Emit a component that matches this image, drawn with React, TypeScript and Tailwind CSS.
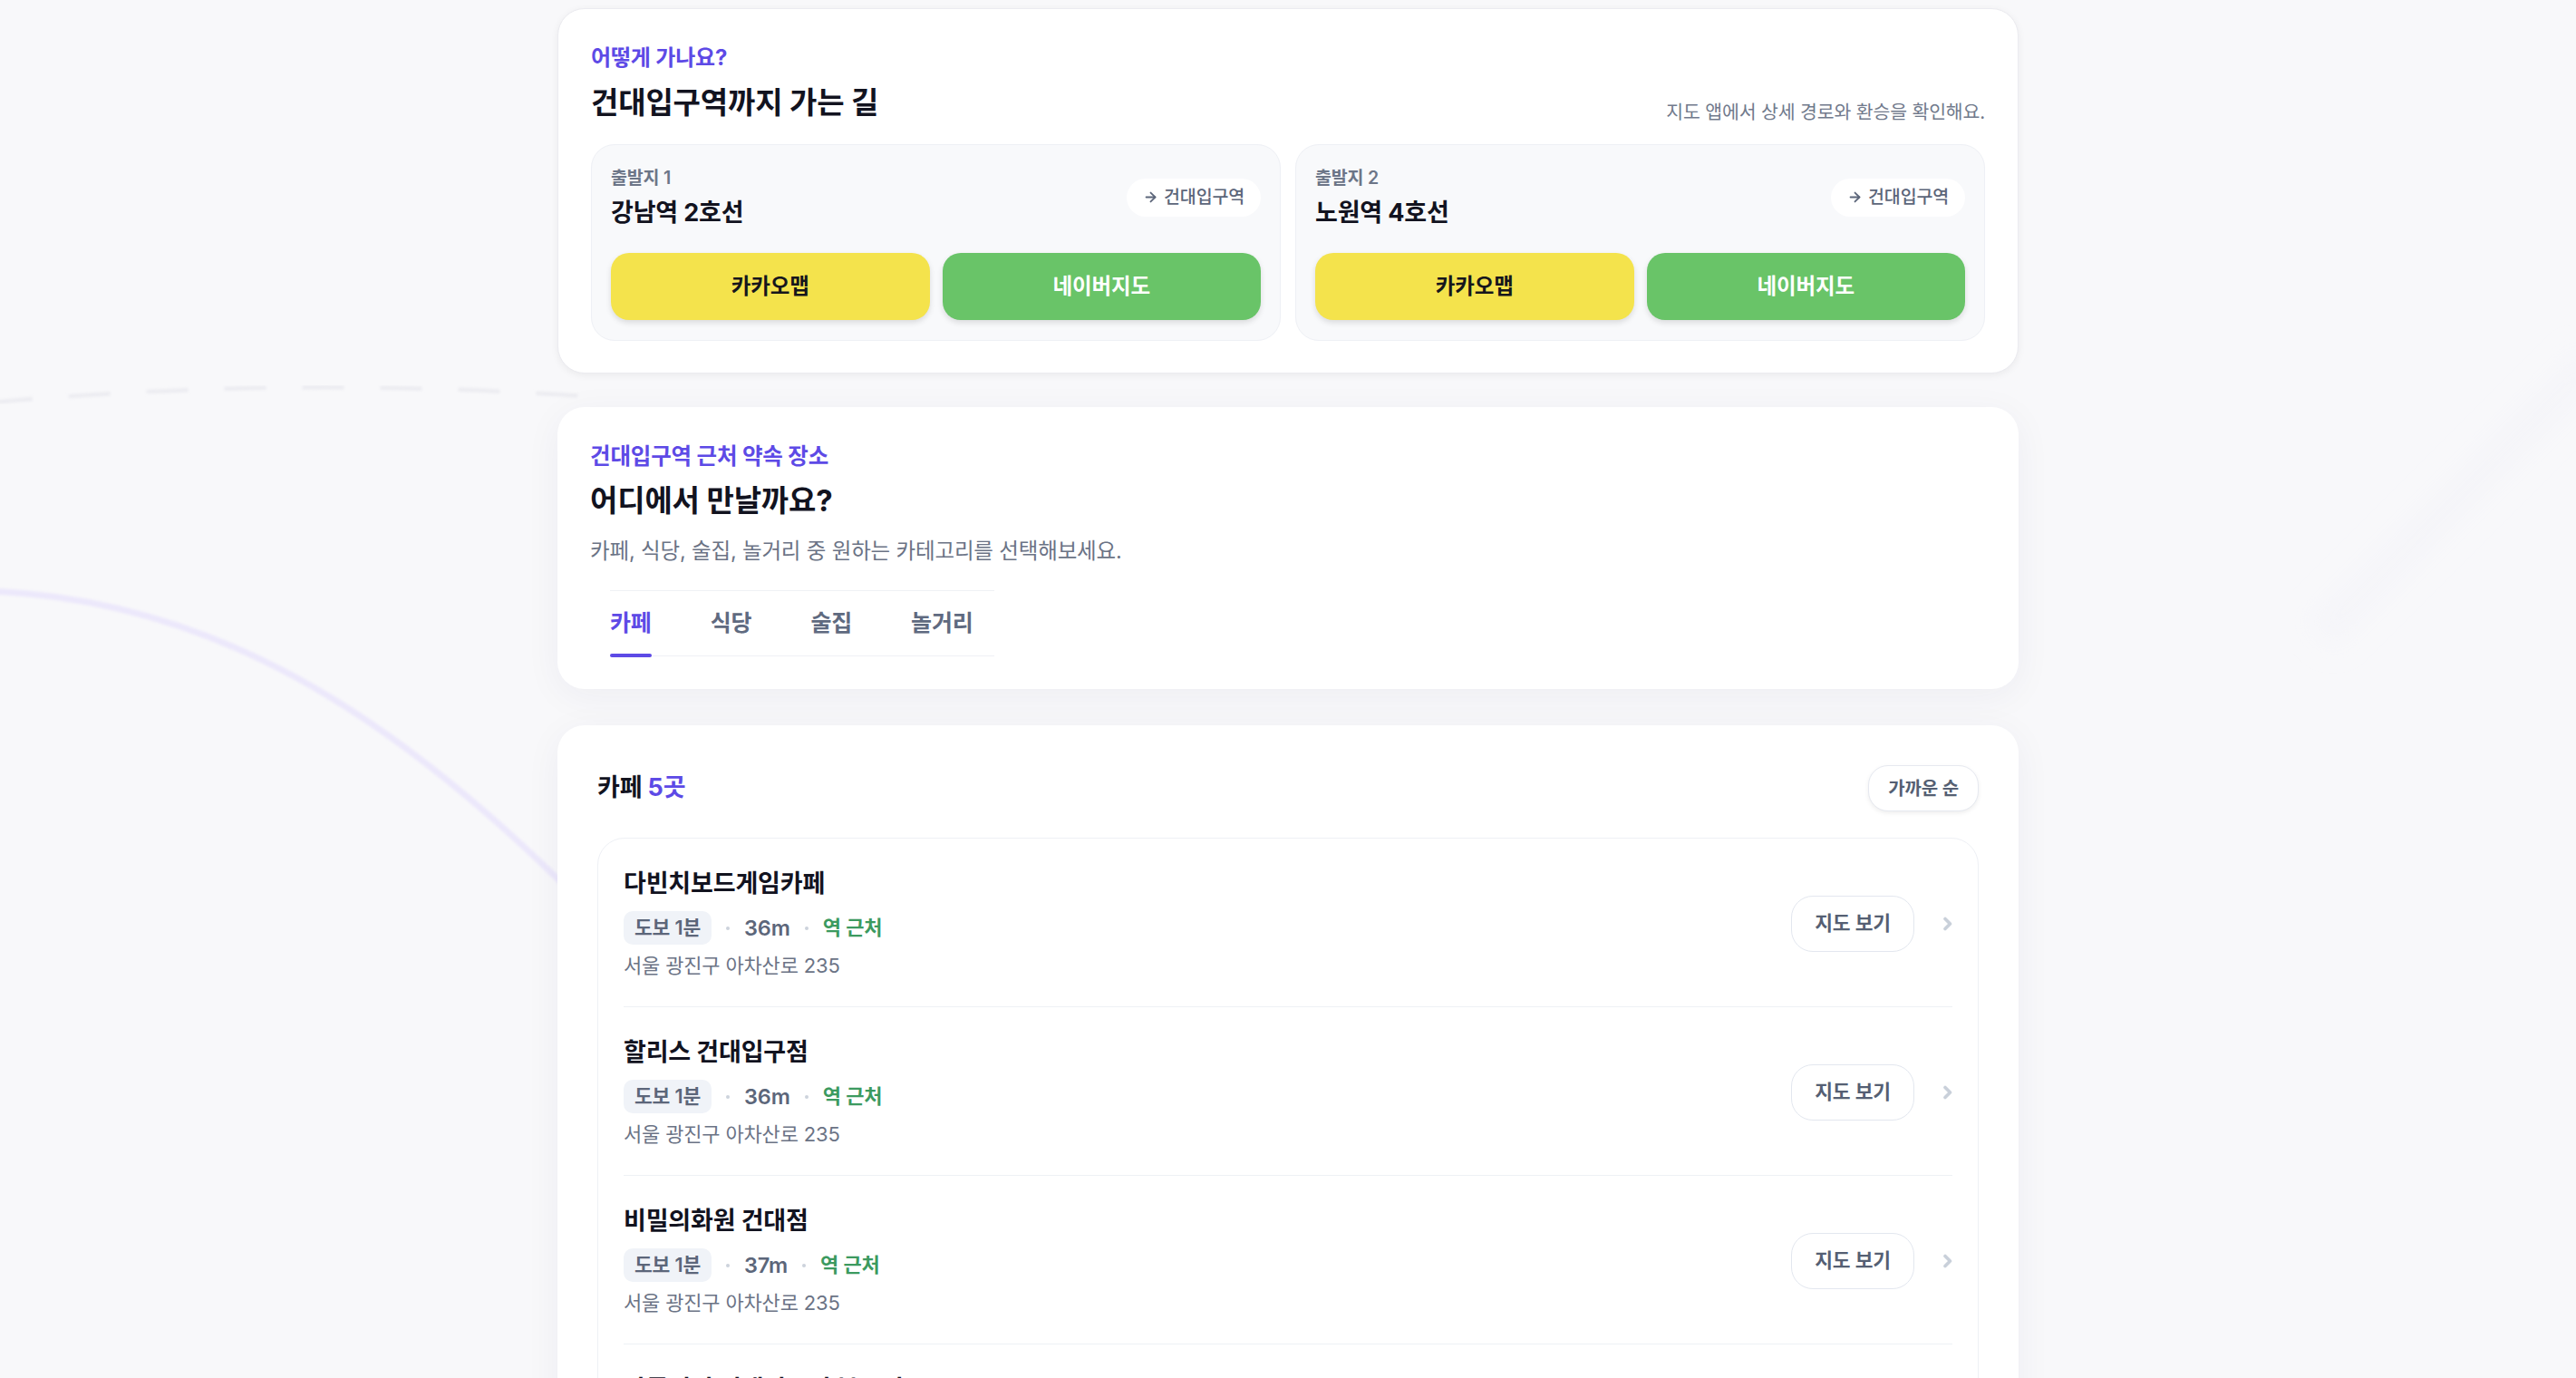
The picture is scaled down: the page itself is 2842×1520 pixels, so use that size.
import { ArrowRight } from 'lucide-react';

type Origin = { label: string; station: string };
type Place = { name: string; walk: string; dist: string; addr: string };

const origins: Origin[] = [
  { label: '출발지 1', station: '강남역 2호선' },
  { label: '출발지 2', station: '노원역 4호선' },
];

const tabs = ['카페', '식당', '술집', '놀거리'];

const places: Place[] = [
  { name: '다빈치보드게임카페', walk: '도보 1분', dist: '36m', addr: '서울 광진구 아차산로 235' },
  { name: '할리스 건대입구점', walk: '도보 1분', dist: '36m', addr: '서울 광진구 아차산로 235' },
  { name: '비밀의화원 건대점', walk: '도보 1분', dist: '37m', addr: '서울 광진구 아차산로 235' },
  { name: '달콤커피 건대입구역 북문점', walk: '도보 1분', dist: '41m', addr: '서울 광진구 아차산로 233' },
  { name: '투썸플레이스 건대역점', walk: '도보 2분', dist: '58m', addr: '서울 광진구 능동로 110' },
];

// faint route lines drawn behind the cards
const BackdropLines = () => (
  <svg
    className="pointer-events-none absolute inset-0 h-full w-full"
    viewBox="0 0 2842 1520"
    preserveAspectRatio="none"
  >
    <defs>
      <filter id="soft" x="-10%" y="-10%" width="120%" height="120%">
        <feGaussianBlur stdDeviation="1.6" />
      </filter>
      <filter id="haze" x="-10%" y="-50%" width="120%" height="200%">
        <feGaussianBlur stdDeviation="14" />
      </filter>
    </defs>
    <path d="M-10 444 Q 320 414 660 438" fill="none" stroke="#ececf1" strokeWidth="4.5" strokeDasharray="46 40" filter="url(#soft)" />
    <path d="M-10 652 C 230 662 430 780 650 1004" fill="none" stroke="#ece8fb" strokeWidth="7" filter="url(#soft)" />
    <path d="M2860 400 L 2560 700" fill="none" stroke="#f5f5f9" strokeWidth="40" filter="url(#haze)" />
    <path d="M2250 1184 L 2860 1184" fill="none" stroke="#efeff4" strokeWidth="5" strokeDasharray="90 70" filter="url(#soft)" />
    <path d="M2228 1478 L 2860 1478" fill="none" stroke="#f0f0f6" strokeWidth="14" filter="url(#soft)" />
  </svg>
);

const OriginCard = ({ origin }: { origin: Origin }) => (
  <div className="rounded-[26px] border border-[#eef0f5] bg-[#f8f9fb] px-[21px] pt-6 pb-[22px]">
    <div className="flex items-center justify-between">
      <div>
        <p className="text-[19.5px] leading-[25px] font-semibold text-[#6c7587]">{origin.label}</p>
        <p className="mt-2.5 text-[27px] leading-[32px] font-bold text-[#12131f]">{origin.station}</p>
      </div>
      <span className="flex h-[42px] items-center gap-1.5 rounded-full bg-white px-[18px] text-[19.5px] font-medium text-[#5c667a]">
        <ArrowRight size={17} strokeWidth={2.5} />
        건대입구역
      </span>
    </div>
    <div className="mt-7 grid grid-cols-2 gap-[14px]">
      <button className="h-[74px] rounded-[20px] bg-[#f4e34c] text-[23.5px] font-bold text-[#16161c] shadow-[0_3px_6px_rgba(0,0,0,0.12)]">
        카카오맵
      </button>
      <button className="h-[74px] rounded-[20px] bg-[#69c468] text-[23.5px] font-bold text-white shadow-[0_3px_6px_rgba(0,0,0,0.12)]">
        네이버지도
      </button>
    </div>
  </div>
);

const PlaceRow = ({ place }: { place: Place }) => (
  <div className="flex items-center border-b border-[#eef1f5] pt-[33px] pb-[31px]">
    <div className="min-w-0 flex-1">
      <p className="text-[27px] leading-[34px] font-bold text-[#12131f]">{place.name}</p>
      <div className="mt-[13px] flex items-center gap-4">
        <span className="flex h-[37px] items-center rounded-[10px] bg-[#f0f3f8] px-3 text-[21.5px] font-semibold text-[#5c667a]">
          {place.walk}
        </span>
        <span className="h-1 w-1 rounded-full bg-[#cdd3dc]" />
        <span className="text-[23.5px] font-semibold text-[#5c667a]">{place.dist}</span>
        <span className="h-1 w-1 rounded-full bg-[#cdd3dc]" />
        <span className="text-[22px] font-semibold text-[#3c9a5f]">역 근처</span>
      </div>
      <p className="mt-[9px] text-[22px] leading-[28px] text-[#6b7385]">{place.addr}</p>
    </div>
    <button className="h-[62px] rounded-[24px] border border-[#e3e7ef] bg-white px-[25px] text-[21.5px] font-semibold text-[#555f73]">
      지도 보기
    </button>
    <svg className="ml-[31px]" width="11" height="16" viewBox="0 0 11 16" fill="none">
      <path d="M3 2.5 L8.5 8 L3 13.5" stroke="#c9d0da" strokeWidth="3.6" strokeLinecap="round" strokeLinejoin="round" />
    </svg>
  </div>
);

export default function App() {
  return (
    <div className="relative h-screen overflow-hidden bg-[#f8f8fa] font-['Inter','Noto_Sans_CJK_KR',sans-serif] tracking-[-0.01em]">
      <BackdropLines />

      <main className="relative mx-auto flex w-[1612px] flex-col pt-[9px]">
        {/* route card */}
        <section className="rounded-[30px] border border-[#ebebf0] bg-white px-9 pt-[38px] pb-[35px] shadow-[0_2px_8px_rgba(0,0,0,0.06)]">
          <div className="flex items-end justify-between">
            <div>
              <p className="text-[24px] leading-[32px] font-bold text-[#5d4ae6]">어떻게 가나요?</p>
              <h2 className="mt-[14px] text-[33px] leading-[39px] font-bold text-[#12131f]">건대입구역까지 가는 길</h2>
            </div>
            <p className="-mb-1 text-[20.5px] leading-[27px] text-[#717a8c]">지도 앱에서 상세 경로와 환승을 확인해요.</p>
          </div>
          <div className="mt-[26px] grid grid-cols-2 gap-4">
            {origins.map((o) => (
              <OriginCard key={o.label} origin={o} />
            ))}
          </div>
        </section>

        {/* category picker */}
        <section className="mt-[37px] rounded-[30px] bg-white px-9 pt-[38px] pb-9 shadow-[0_8px_40px_rgba(40,40,90,0.05)]">
          <p className="text-[24.5px] leading-[32px] font-bold text-[#5d4ae6]">건대입구역 근처 약속 장소</p>
          <h2 className="mt-[14px] text-[33px] leading-[39px] font-bold text-[#12131f]">어디에서 만날까요?</h2>
          <p className="mt-[19px] text-[23.5px] leading-[33px] text-[#6b7385]">
            카페, 식당, 술집, 놀거리 중 원하는 카테고리를 선택해보세요.
          </p>
          <div className="mt-[27px] ml-[22px] flex w-fit gap-[65px] border-y border-[#eff1f5] pr-[23px]">
            {tabs.map((t, i) => (
              <button
                key={t}
                className={`relative pt-[19px] pb-[20px] text-[25px] leading-[32px] font-semibold ${
                  i === 0 ? 'text-[#5d4ae6]' : 'text-[#5f6a80]'
                }`}
              >
                {t}
                {i === 0 && <span className="absolute right-0 -bottom-[2px] left-0 h-1 rounded-full bg-[#5d4ae6]" />}
              </button>
            ))}
          </div>
        </section>

        {/* place list */}
        <section className="mt-10 rounded-[30px] bg-white p-11 shadow-[0_8px_40px_rgba(40,40,90,0.05)]">
          <div className="flex h-[51px] items-center justify-between">
            <h3 className="text-[27px] font-bold text-[#12131f]">
              카페 <span className="text-[#5d4ae6]">5곳</span>
            </h3>
            <button className="h-[51px] rounded-[22px] border border-[#e6e9f0] bg-white px-[21px] text-[20px] font-semibold text-[#555f73] shadow-[0_2px_5px_rgba(0,0,0,0.07)]">
              가까운 순
            </button>
          </div>
          <div className="mt-[29px] rounded-[30px] border border-[#eef0f5] px-[28px]">
            {places.map((p) => (
              <PlaceRow key={p.name} place={p} />
            ))}
          </div>
        </section>
      </main>
    </div>
  );
}
